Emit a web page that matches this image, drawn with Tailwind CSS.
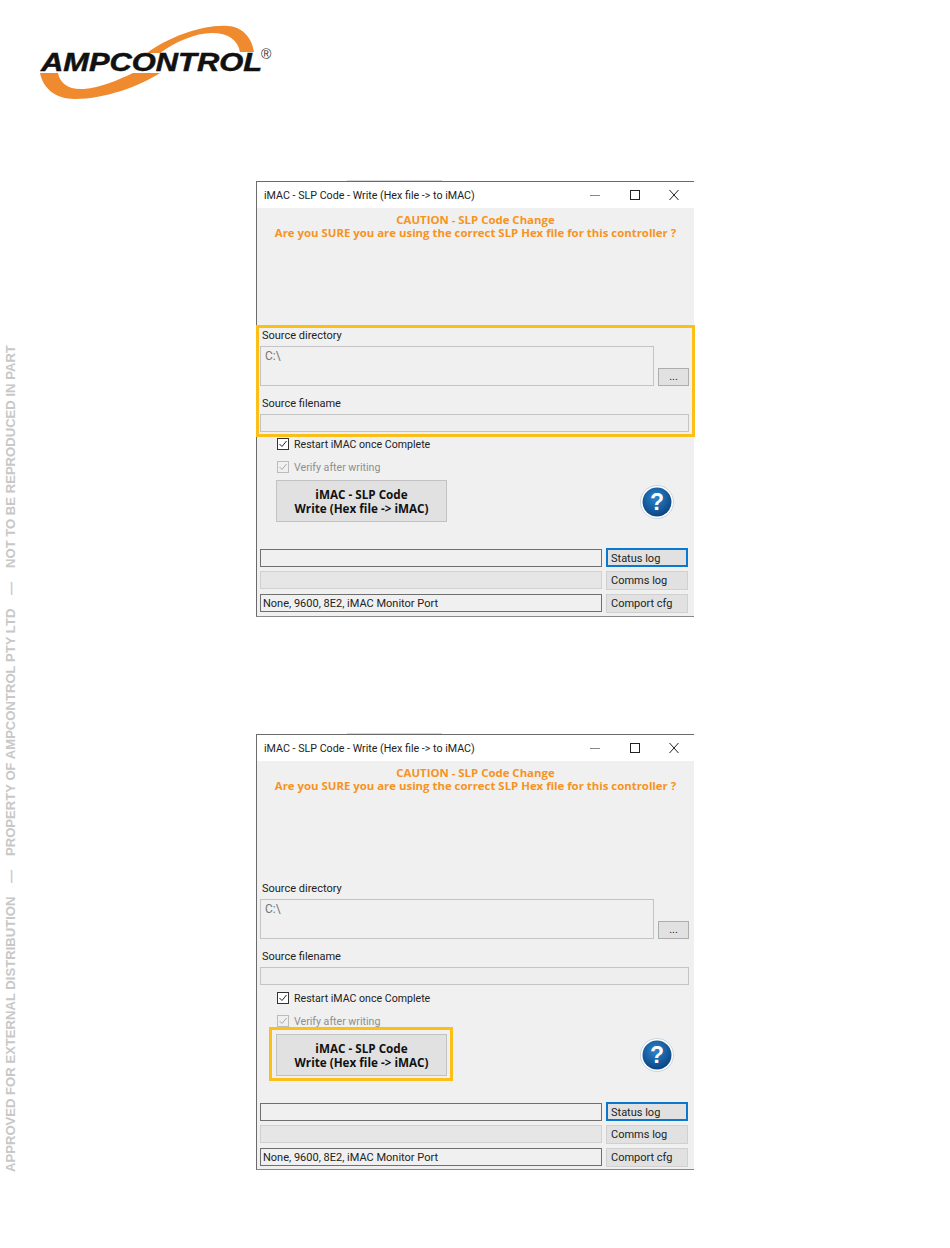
<!DOCTYPE html>
<html lang="en">

<head>
    <meta charset="UTF-8">
    <title>iMAC - SLP Code - Write</title>
    <script src="https://cdn.jsdelivr.net/npm/@tailwindcss/browser@4"></script>
</head>

<body class="bg-white font-['Roboto',sans-serif] text-[11px] leading-[14px] text-[#222]">
    <div class="relative w-[950px] h-[1248px] overflow-hidden">

        <!-- Rotated side notice -->
        <div class="absolute left-[4px] top-[345px] h-[827px] flex justify-between rotate-180 [writing-mode:vertical-rl] font-['Liberation_Sans',sans-serif] font-bold text-[13.1px] leading-[14px] text-[#c8c8c8] whitespace-nowrap">
            <span>APPROVED FOR EXTERNAL DISTRIBUTION</span>
            <span>—</span>
            <span>PROPERTY OF AMPCONTROL PTY LTD</span>
            <span>—</span>
            <span>NOT TO BE REPRODUCED IN PART</span>
        </div>

        <!-- Logo -->
        <header class="pl-[38px] pt-[24px] h-[181px]">
            <svg width="240" height="78" viewBox="38 24 240 78">
                <path fill="#f08a2e" d="M147 53C170 36 205 24 228 26C243 27 252 38 254 52L240 52C238 40 228 33 212 33C195 33 175 42 160 53Z" />
                <path fill="#f08a2e" d="M40 73L58 73C60 83 68 90 84 89C100 88 118 80 133 73L160 73C140 86 105 99 75 99C55 99 43 88 40 73Z" />
                <text x="41" y="71" textLength="221" lengthAdjust="spacingAndGlyphs" font-family="Liberation Sans" font-weight="700" font-style="italic" font-size="26" fill="#111" stroke="#111" stroke-width=".5">AMPCONTROL</text>
                <text x="261" y="59" font-family="Liberation Sans" font-size="14" fill="#333">®</text>
            </svg>
        </header>

        <!-- First window -->
        <section class="relative ml-[256px] w-[438px] h-[436px] border-t border-l border-[#6b6b6b] border-b-[#8a8a8a] border-b bg-[#f0f0f0]">
            <div class="absolute left-[90px] top-[-2px] w-[95px] h-[1px] bg-[#d8d8d8]"></div>
            <div class="flex items-center justify-between h-[26px] bg-white pl-[7px] pr-[13px]">
                <span class="translate-y-px text-[10.7px]">iMAC - SLP Code - Write (Hex file -&gt; to iMAC)</span>
                <div class="flex items-center gap-[24px]">
                    <svg width="16" height="12" viewBox="0 0 16 12"><path d="M3 6.5h10" stroke="#888" /></svg>
                    <svg width="16" height="12" viewBox="0 0 16 12"><rect x="3.5" y="1.5" width="9" height="9" fill="none" stroke="#222" /></svg>
                    <svg width="14" height="12" viewBox="0 0 14 12"><path d="M2.5 1l9 10M11.5 1l-9 10" stroke="#222" fill="none" /></svg>
                </div>
            </div>
            <div class="px-[3px] pt-[5px]">
                <p class="text-center font-['Open_Sans',sans-serif] font-bold text-[11.4px] leading-[13px] text-[#f7931e]">CAUTION - SLP Code Change<br>Are you SURE you are using the correct SLP Hex file for this controller ?</p>

                <label class="block mt-[89px] pl-[2px] translate-y-px">Source directory</label>
                <div class="flex items-end gap-[4px] mt-[4px]">
                    <div class="w-[394px] h-[40px] border border-[#c4c4c4] px-[4px] py-[2px] text-[12px] text-[#777]">C:\</div>
                    <button class="w-[31px] h-[18px] border border-[#adadad] bg-[#e1e1e1] leading-[14px]">...</button>
                </div>
                <label class="block mt-[10px] pl-[2px] translate-y-px">Source filename</label>
                <div class="w-[429px] h-[18px] mt-[4px] border border-[#c4c4c4] bg-[#eeeeee]"></div>

                <div class="flex items-center gap-[5px] mt-[5px] ml-[17px]">
                    <svg width="12" height="12" viewBox="0 0 12 12"><rect x=".5" y=".5" width="11" height="11" fill="#fff" stroke="#333" /><path d="M2.5 6l2.5 2.5L9.5 3" fill="none" stroke="#222" /></svg>
                    <span class="translate-y-px text-[10.6px]">Restart iMAC once Complete</span>
                </div>
                <div class="flex items-center gap-[5px] mt-[9px] ml-[17px] text-[#8e8e8e]">
                    <svg width="12" height="12" viewBox="0 0 12 12"><rect x=".5" y=".5" width="11" height="11" fill="#f0f0f0" stroke="#bbb" /><path d="M2.5 6l2.5 2.5L9.5 3" fill="none" stroke="#aaa" /></svg>
                    <span class="translate-y-px text-[10.6px]">Verify after writing</span>
                </div>

                <div class="flex items-center justify-between mt-[6px] ml-[16px] pr-[17px]">
                    <button class="w-[171px] h-[42px] border border-[#c2c2c2] bg-[#e1e1e1] font-['Open_Sans',sans-serif] font-bold text-[11.7px] leading-[14px] text-[#111]">iMAC - SLP Code<br>Write (Hex file -&gt; iMAC)</button>
                    <svg class="mt-[2px]" width="34" height="34" viewBox="0 0 34 34">
                        <defs>
                            <radialGradient id="help1" cx="45%" cy="35%" r="70%">
                                <stop offset="0" stop-color="#2a86cc" />
                                <stop offset="1" stop-color="#0a3f7d" />
                            </radialGradient>
                        </defs>
                        <circle cx="17" cy="17" r="16.5" fill="#fff" stroke="#c8d4de" />
                        <circle cx="17" cy="17" r="14.5" fill="url(#help1)" />
                        <text x="17" y="25" text-anchor="middle" font-family="Liberation Sans" font-weight="700" font-size="23" fill="#fff">?</text>
                    </svg>
                </div>

                <div class="grid grid-cols-[342px_82px] gap-x-[4px] mt-[26px]">
                    <div class="h-[18px] mt-[1px] border border-[#6f6f6f]"></div>
                    <button class="h-[19px] pt-[2px] border-2 border-[#0a78cf] bg-[#e1e1e1] text-left pl-[3px] leading-[14px]">Status log</button>
                    <div class="h-[18px] mt-[4px] border border-[#d0d0d0] bg-[#e6e6e6]"></div>
                    <button class="h-[19px] mt-[4px] border border-[#d0d0d0] bg-[#e1e1e1] text-left pl-[4px] leading-[14px]">Comms log</button>
                    <div class="h-[18px] mt-[4px] border border-[#6f6f6f] pl-[2px] leading-[18px]">None, 9600, 8E2, iMAC Monitor Port</div>
                    <button class="h-[19px] mt-[4px] border border-[#d0d0d0] bg-[#e1e1e1] text-left pl-[4px] leading-[14px]">Comport cfg</button>
                </div>
            </div>
            <!-- Highlight over the source fields -->
            <div class="absolute left-[-1px] top-[143px] w-[439px] h-[112px] border-[3px] border-[#fcbf17]"></div>
        </section>

        <!-- Second window -->
        <section class="relative ml-[256px] mt-[117px] w-[438px] h-[436px] border-t border-l border-[#6b6b6b] border-b-[#8a8a8a] border-b bg-[#f0f0f0]">
            <div class="absolute left-[90px] top-[-2px] w-[95px] h-[1px] bg-[#d8d8d8]"></div>
            <div class="flex items-center justify-between h-[26px] bg-white pl-[7px] pr-[13px]">
                <span class="translate-y-px text-[10.7px]">iMAC - SLP Code - Write (Hex file -&gt; to iMAC)</span>
                <div class="flex items-center gap-[24px]">
                    <svg width="16" height="12" viewBox="0 0 16 12"><path d="M3 6.5h10" stroke="#888" /></svg>
                    <svg width="16" height="12" viewBox="0 0 16 12"><rect x="3.5" y="1.5" width="9" height="9" fill="none" stroke="#222" /></svg>
                    <svg width="14" height="12" viewBox="0 0 14 12"><path d="M2.5 1l9 10M11.5 1l-9 10" stroke="#222" fill="none" /></svg>
                </div>
            </div>
            <div class="px-[3px] pt-[5px]">
                <p class="text-center font-['Open_Sans',sans-serif] font-bold text-[11.4px] leading-[13px] text-[#f7931e]">CAUTION - SLP Code Change<br>Are you SURE you are using the correct SLP Hex file for this controller ?</p>

                <label class="block mt-[89px] pl-[2px] translate-y-px">Source directory</label>
                <div class="flex items-end gap-[4px] mt-[4px]">
                    <div class="w-[394px] h-[40px] border border-[#c4c4c4] px-[4px] py-[2px] text-[12px] text-[#777]">C:\</div>
                    <button class="w-[31px] h-[18px] border border-[#adadad] bg-[#e1e1e1] leading-[14px]">...</button>
                </div>
                <label class="block mt-[10px] pl-[2px] translate-y-px">Source filename</label>
                <div class="w-[429px] h-[18px] mt-[4px] border border-[#c4c4c4] bg-[#eeeeee]"></div>

                <div class="flex items-center gap-[5px] mt-[6px] ml-[17px]">
                    <svg width="12" height="12" viewBox="0 0 12 12"><rect x=".5" y=".5" width="11" height="11" fill="#fff" stroke="#333" /><path d="M2.5 6l2.5 2.5L9.5 3" fill="none" stroke="#222" /></svg>
                    <span class="translate-y-px text-[10.6px]">Restart iMAC once Complete</span>
                </div>
                <div class="flex items-center gap-[5px] mt-[9px] ml-[17px] text-[#8e8e8e]">
                    <svg width="12" height="12" viewBox="0 0 12 12"><rect x=".5" y=".5" width="11" height="11" fill="#f0f0f0" stroke="#bbb" /><path d="M2.5 6l2.5 2.5L9.5 3" fill="none" stroke="#aaa" /></svg>
                    <span class="translate-y-px text-[10.6px]">Verify after writing</span>
                </div>

                <div class="flex items-center justify-between mt-[6px] ml-[16px] pr-[17px]">
                    <button class="w-[171px] h-[42px] border border-[#c2c2c2] bg-[#e1e1e1] font-['Open_Sans',sans-serif] font-bold text-[11.7px] leading-[14px] text-[#111]">iMAC - SLP Code<br>Write (Hex file -&gt; iMAC)</button>
                    <svg class="mt-[0px]" width="34" height="34" viewBox="0 0 34 34">
                        <defs>
                            <radialGradient id="help2" cx="45%" cy="35%" r="70%">
                                <stop offset="0" stop-color="#2a86cc" />
                                <stop offset="1" stop-color="#0a3f7d" />
                            </radialGradient>
                        </defs>
                        <circle cx="17" cy="17" r="16.5" fill="#fff" stroke="#c8d4de" />
                        <circle cx="17" cy="17" r="14.5" fill="url(#help2)" />
                        <text x="17" y="25" text-anchor="middle" font-family="Liberation Sans" font-weight="700" font-size="23" fill="#fff">?</text>
                    </svg>
                </div>

                <div class="grid grid-cols-[342px_82px] gap-x-[4px] mt-[26px]">
                    <div class="h-[18px] mt-[1px] border border-[#6f6f6f]"></div>
                    <button class="h-[19px] pt-[2px] border-2 border-[#0a78cf] bg-[#e1e1e1] text-left pl-[3px] leading-[14px]">Status log</button>
                    <div class="h-[18px] mt-[4px] border border-[#d0d0d0] bg-[#e6e6e6]"></div>
                    <button class="h-[19px] mt-[4px] border border-[#d0d0d0] bg-[#e1e1e1] text-left pl-[4px] leading-[14px]">Comms log</button>
                    <div class="h-[18px] mt-[4px] border border-[#6f6f6f] pl-[2px] leading-[18px]">None, 9600, 8E2, iMAC Monitor Port</div>
                    <button class="h-[19px] mt-[4px] border border-[#d0d0d0] bg-[#e1e1e1] text-left pl-[4px] leading-[14px]">Comport cfg</button>
                </div>
            </div>
            <!-- Highlight over the write button -->
            <div class="absolute left-[12px] top-[292px] w-[184px] h-[54px] border-[3px] border-[#fcbf17]"></div>
        </section>
    </div>
</body>

</html>
